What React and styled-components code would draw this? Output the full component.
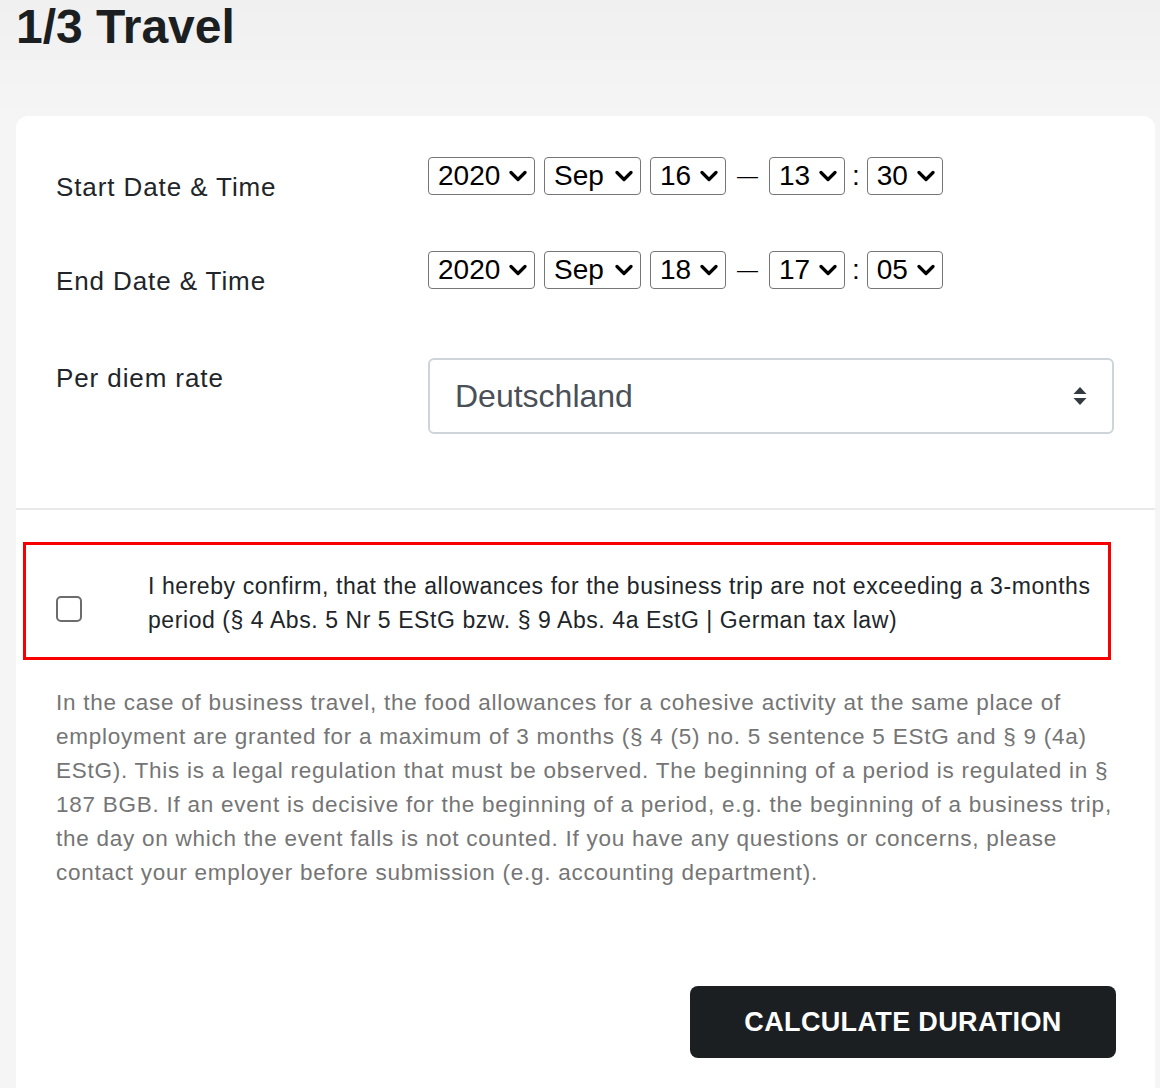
import React from "react";
import styled, { createGlobalStyle } from "styled-components";

const GlobalStyle = createGlobalStyle`
  html, body { margin: 0; padding: 0; }
  body {
    background: #f4f4f4;
    font-family: "Liberation Sans", Arial, Helvetica, sans-serif;
    color: #212529;
  }
  * { box-sizing: border-box; }
`;

const Page = styled.div`
  padding: 0 5px 0 16px;
  height: 1088px;
  overflow: hidden;
  background: linear-gradient(#f0f0f0, #f5f5f5 120px, #f5f5f5);
`;

const Title = styled.h1`
  margin: 0;
  padding: 0;
  font-size: 48px;
  line-height: 54px;
  font-weight: 700;
  color: #1c1f22;
  height: 116px;
`;

const Card = styled.div`
  background: #fff;
  border-radius: 12px 12px 0 0;
  padding-top: 41px;
  min-height: 980px;
`;

const FormArea = styled.div`
  padding: 0 41px 0 40px;
`;

const Row = styled.div`
  display: grid;
  grid-template-columns: 372px 1fr;
  align-items: start;
  margin-bottom: ${(p) => p.$mb}px;
`;

const Label = styled.div`
  font-size: 26px;
  line-height: 36px;
  letter-spacing: 0.9px;
  padding-top: ${(p) => p.$pt}px;
  color: #212529;
`;

const Controls = styled.div`
  display: flex;
  align-items: center;
  gap: 9px;
`;

const SelectWrap = styled.div`
  position: relative;
  width: ${(p) => p.$w}px;
  height: 38px;
`;

const SmallSelect = styled.select`
  appearance: none;
  -webkit-appearance: none;
  width: 100%;
  height: 100%;
  border: 1.5px solid #767676;
  border-radius: 4px;
  background: #fff;
  font-family: "Liberation Sans", Arial, sans-serif;
  font-size: 28px;
  color: #000;
  padding: 0 0 0 9px;
  line-height: 34px;
`;

const Chevron = styled.svg`
  position: absolute;
  right: 8px;
  top: 50%;
  transform: translateY(-50%);
  width: 18px;
  height: 12px;
  pointer-events: none;
`;

const Sep = styled.span`
  font-size: ${(p) => p.$fs}px;
  color: #000;
  line-height: 38px;
  margin: ${(p) => p.$m};
`;

const BigSelectWrap = styled.div`
  position: relative;
  width: 686px;
  height: 76px;
`;

const BigSelect = styled.select`
  appearance: none;
  -webkit-appearance: none;
  width: 100%;
  height: 100%;
  border: 2px solid #ced4da;
  border-radius: 6px;
  background: #fff;
  font-family: "Liberation Sans", Arial, sans-serif;
  font-size: 32px;
  color: #495057;
  padding: 0 0 0 25px;
`;

const UpDown = styled.svg`
  position: absolute;
  right: 26px;
  top: 50%;
  transform: translateY(-50%);
  width: 16px;
  height: 22px;
  pointer-events: none;
`;

const Divider = styled.hr`
  border: 0;
  border-top: 2px solid #e9e9e9;
  margin: 74px 0 0;
`;

const ConfirmBox = styled.label`
  display: flex;
  align-items: center;
  margin: 32px 0 0 7px;
  width: 1088px;
  height: 118px;
  border: 3px solid #f80000;
  padding: 0 8px 0 30px;
`;

const CheckBox = styled.input`
  appearance: none;
  -webkit-appearance: none;
  flex: 0 0 auto;
  width: 26px;
  height: 26px;
  margin: 16px 66px 0 0;
  border: 2px solid #6c6c6c;
  border-radius: 5px;
  background: #fff;
`;

const ConfirmText = styled.span`
  font-size: 23px;
  line-height: 34px;
  letter-spacing: 0.57px;
  padding-top: 4px;
  color: #212529;
`;

const Note = styled.p`
  margin: 26px 0 0;
  padding: 0 40px;
  font-size: 22.5px;
  line-height: 34px;
  letter-spacing: 0.75px;
  color: #757575;
`;

const Footer = styled.div`
  display: flex;
  justify-content: flex-end;
  padding: 0 39px 0 0;
  margin-top: 96px;
`;

const Button = styled.button`
  width: 426px;
  height: 72px;
  background: #1c1f22;
  color: #fff;
  border: 0;
  border-radius: 8px;
  font-family: "Liberation Sans", Arial, sans-serif;
  font-weight: 700;
  font-size: 27px;
  text-transform: uppercase;
  letter-spacing: 0.35px;
`;

const ChevronIcon = () => (
  <Chevron viewBox="0 0 18 12">
    <path d="M2 2.5 L9 9.5 L16 2.5" fill="none" stroke="#000" strokeWidth="3.2" strokeLinecap="round" strokeLinejoin="round" />
  </Chevron>
);

const Small = ({ w, value, options }) => (
  <SelectWrap $w={w}>
    <SmallSelect defaultValue={value}>
      {options.map((o) => (
        <option key={o}>{o}</option>
      ))}
    </SmallSelect>
    <ChevronIcon />
  </SelectWrap>
);

const DateTimeRow = ({ y, m, d, h, min }) => (
  <Controls>
    <Small w={107} value={y} options={["2019", "2020", "2021"]} />
    <Small w={97} value={m} options={["Aug", "Sep", "Oct"]} />
    <Small w={76} value={d} options={[d]} />
    <Sep $fs={21} $m="0 2px">—</Sep>
    <Small w={76} value={h} options={[h]} />
    <Sep $fs={28} $m="0 -2px">:</Sep>
    <Small w={76} value={min} options={[min]} />
  </Controls>
);

export default function App() {
  return (
    <>
      <GlobalStyle />
      <Page>
        <Title>1/3 Travel</Title>
        <Card>
          <FormArea>
            <Row $mb={46}>
              <Label $pt={12}>Start Date &amp; Time</Label>
              <DateTimeRow y="2020" m="Sep" d="16" h="13" min="30" />
            </Row>
            <Row $mb={59}>
              <Label $pt={12}>End Date &amp; Time</Label>
              <DateTimeRow y="2020" m="Sep" d="18" h="17" min="05" />
            </Row>
            <Row $mb={0}>
              <Label $pt={2}>Per diem rate</Label>
              <BigSelectWrap>
                <BigSelect defaultValue="Deutschland">
                  <option>Deutschland</option>
                  <option>Österreich</option>
                </BigSelect>
                <UpDown viewBox="0 0 16 22">
                  <path d="M8 2 L14.5 9 L1.5 9 Z" fill="#343a40" />
                  <path d="M8 20 L14.5 13 L1.5 13 Z" fill="#343a40" />
                </UpDown>
              </BigSelectWrap>
            </Row>
          </FormArea>
          <Divider />
          <ConfirmBox>
            <CheckBox type="checkbox" />
            <ConfirmText>
              I hereby confirm, that the allowances for the business trip are not exceeding a 3-months period (§ 4 Abs. 5 Nr 5 EStG bzw. § 9 Abs. 4a EstG | German tax law)
            </ConfirmText>
          </ConfirmBox>
          <Note>
            In the case of business travel, the food allowances for a cohesive activity at the same place of employment are granted for a maximum of 3 months (§ 4 (5) no. 5 sentence 5 EStG and § 9 (4a) EStG). This is a legal regulation that must be observed. The beginning of a period is regulated in § 187 BGB. If an event is decisive for the beginning of a period, e.g. the beginning of a business trip, the day on which the event falls is not counted. If you have any questions or concerns, please contact your employer before submission (e.g. accounting department).
          </Note>
          <Footer>
            <Button>Calculate Duration</Button>
          </Footer>
        </Card>
      </Page>
    </>
  );
}
